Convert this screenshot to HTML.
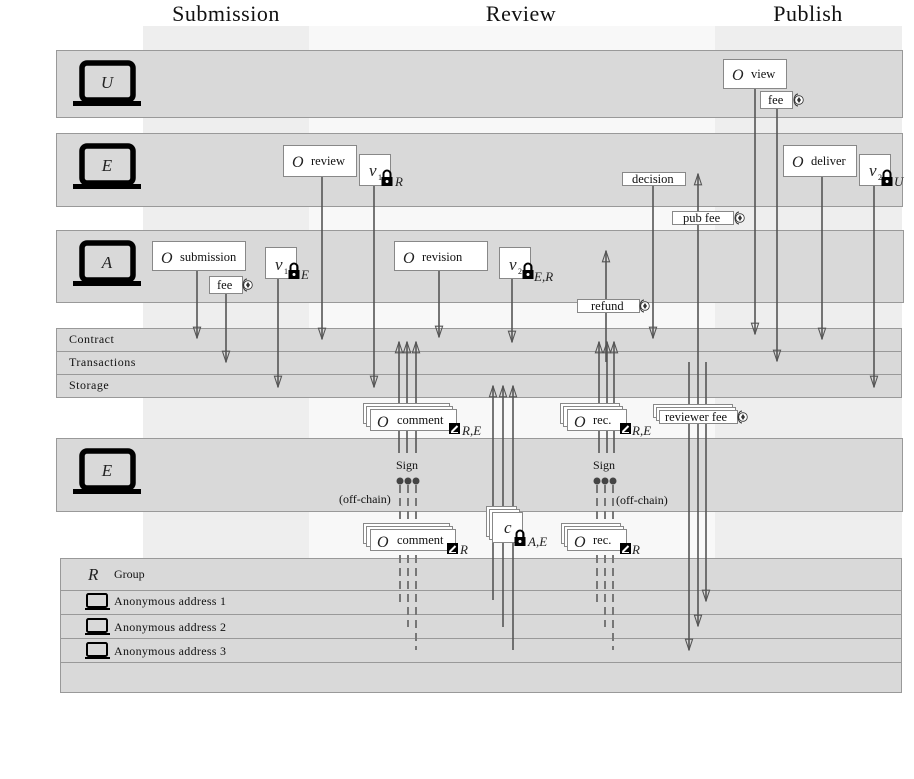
<!DOCTYPE html>
<html><head><meta charset="utf-8"><style>
html,body{margin:0;padding:0;background:#fff}
svg{display:block}
text{font-family:"Liberation Serif",serif;fill:#111}
.s{font-style:italic;fill:#222}
</style></head><body>
<svg width="914" height="779" viewBox="0 0 914 779" xmlns="http://www.w3.org/2000/svg">
<defs>
<marker id="d" viewBox="0 0 14 10" refX="13" refY="5" markerWidth="13" markerHeight="9" markerUnits="userSpaceOnUse" orient="auto">
<path d="M1,1 L13,5 L1,9 Z" fill="none" stroke="#555" stroke-width="1.2"/>
</marker>
<g id="lap"><rect x="82" y="63" width="51" height="37" rx="5" fill="none" stroke="#000" stroke-width="5.5"/><rect x="73" y="101" width="68" height="5" fill="#000"/></g>
<g id="smlap"><rect x="87" y="0" width="20" height="13" rx="1.5" fill="none" stroke="#000" stroke-width="2"/><rect x="85" y="14" width="25" height="2" fill="#000"/></g>
<g id="lock"><path d="M-3.5,0 V-3 A3.5,3.5 0 0 1 3.5,-3 V0" fill="none" stroke="#000" stroke-width="2"/><rect x="-5.5" y="0" width="11" height="9" fill="#000"/><circle cx="0" cy="4.5" r="1.5" fill="#fff"/></g>
<g id="eth"><path d="M4,0 A4,6 0 1 0 4,12" fill="none" stroke="#333" stroke-width="1"/><circle cx="5" cy="6" r="4.3" fill="#fff" stroke="#333" stroke-width="0.8"/><path d="M5,3 L7,6 L5,9 L3,6Z" fill="#333"/></g>
<g id="pen"><rect x="0" y="0" width="11" height="11" fill="#000"/><path d="M2.5,9 L8.5,3" stroke="#fff" stroke-width="2"/><path d="M2,9.5 H9" stroke="#fff" stroke-width="1"/></g>
</defs>

<rect x="143" y="26" width="166" height="532" fill="#eeeeee"/>
<rect x="309" y="26" width="406" height="532" fill="#f8f8f8"/>
<rect x="715" y="26" width="187" height="532" fill="#eeeeee"/>
<text x="226" y="21" font-size="22" text-anchor="middle" letter-spacing="0.5">Submission</text>
<text x="521" y="21" font-size="22" text-anchor="middle" letter-spacing="0.5">Review</text>
<text x="808" y="21" font-size="22" text-anchor="middle" letter-spacing="0.5">Publish</text>

<g fill="#d9d9d9" stroke="#999" stroke-width="1">
<rect x="56.5" y="50.5" width="846" height="67"/>
<rect x="56.5" y="133.5" width="846" height="73"/>
<rect x="56.5" y="230.5" width="847" height="72"/>
<rect x="56.5" y="328.5" width="845" height="69"/>
<rect x="56.5" y="438.5" width="846" height="73"/>
<rect x="60.5" y="558.5" width="841" height="134"/>
</g>
<g stroke="#999" stroke-width="1">
<line x1="56" y1="351.5" x2="902" y2="351.5"/><line x1="56" y1="374.5" x2="902" y2="374.5"/>
<line x1="60" y1="590.5" x2="902" y2="590.5"/><line x1="60" y1="614.5" x2="902" y2="614.5"/><line x1="60" y1="638.5" x2="902" y2="638.5"/><line x1="60" y1="662.5" x2="902" y2="662.5"/>
</g>
<text x="69" y="343" font-size="12" letter-spacing="0.5">Contract</text>
<text x="69" y="366" font-size="12" letter-spacing="0.5">Transactions</text>
<text x="69" y="389" font-size="12" letter-spacing="0.5">Storage</text>

<use href="#lap"/><text class="s" x="107" y="88" font-size="17" text-anchor="middle">U</text>
<use href="#lap" y="83"/><text class="s" x="107" y="171" font-size="17" text-anchor="middle">E</text>
<use href="#lap" y="180"/><text class="s" x="107" y="268" font-size="17" text-anchor="middle">A</text>
<use href="#lap" y="388"/><text class="s" x="107" y="476" font-size="17" text-anchor="middle">E</text>

<text class="s" x="88" y="580" font-size="17">R</text><text x="114" y="578" font-size="12">Group</text>
<use href="#smlap" y="594"/><text x="114" y="605" font-size="12" letter-spacing="0.3">Anonymous address 1</text>
<use href="#smlap" y="619"/><text x="114" y="631" font-size="12" letter-spacing="0.3">Anonymous address 2</text>
<use href="#smlap" y="643"/><text x="114" y="655" font-size="12" letter-spacing="0.3">Anonymous address 3</text>

<g stroke="#555" stroke-width="1.6" fill="none" marker-end="url(#d)">
<line x1="197" y1="270" x2="197" y2="338"/>
<line x1="226" y1="293" x2="226" y2="362"/>
<line x1="278" y1="278" x2="278" y2="387"/>
<line x1="322" y1="176" x2="322" y2="339"/>
<line x1="374" y1="185" x2="374" y2="387"/>
<line x1="439" y1="270" x2="439" y2="337"/>
<line x1="512" y1="278" x2="512" y2="342"/>
<line x1="653" y1="185" x2="653" y2="338"/>
<line x1="755" y1="88" x2="755" y2="334"/>
<line x1="777" y1="108" x2="777" y2="361"/>
<line x1="822" y1="176" x2="822" y2="339"/>
<line x1="874" y1="185" x2="874" y2="387"/>
<line x1="399" y1="453" x2="399" y2="342"/>
<line x1="407" y1="453" x2="407" y2="342"/>
<line x1="416" y1="453" x2="416" y2="342"/>
<line x1="599" y1="453" x2="599" y2="342"/>
<line x1="607" y1="453" x2="607" y2="342"/>
<line x1="614" y1="453" x2="614" y2="342"/>
<line x1="493" y1="600" x2="493" y2="386"/>
<line x1="503" y1="627" x2="503" y2="386"/>
<line x1="513" y1="650" x2="513" y2="386"/>
<line x1="606" y1="362" x2="606" y2="251"/>
<line x1="698" y1="362" x2="698" y2="174"/>
<line x1="706" y1="362" x2="706" y2="601"/>
<line x1="698" y1="362" x2="698" y2="626"/>
<line x1="689" y1="362" x2="689" y2="650"/>
</g>
<g stroke="#777" stroke-width="2" stroke-dasharray="8,5" fill="none">
<line x1="400" y1="485" x2="400" y2="520"/><line x1="408" y1="485" x2="408" y2="520"/><line x1="416" y1="485" x2="416" y2="520"/>
<line x1="400" y1="555" x2="400" y2="603"/><line x1="408" y1="555" x2="408" y2="627"/><line x1="416" y1="555" x2="416" y2="650"/>
<line x1="597" y1="485" x2="597" y2="520"/><line x1="605" y1="485" x2="605" y2="520"/><line x1="613" y1="485" x2="613" y2="520"/>
<line x1="597" y1="555" x2="597" y2="603"/><line x1="605" y1="555" x2="605" y2="627"/><line x1="613" y1="555" x2="613" y2="650"/>
</g>
<g fill="#444"><circle cx="400" cy="481" r="3.5"/><circle cx="408" cy="481" r="3.5"/><circle cx="416" cy="481" r="3.5"/>
<circle cx="597" cy="481" r="3.5"/><circle cx="605" cy="481" r="3.5"/><circle cx="613" cy="481" r="3.5"/></g>
<text x="407" y="469" font-size="12" text-anchor="middle">Sign</text>
<text x="604" y="469" font-size="12" text-anchor="middle">Sign</text>
<text x="339" y="503" font-size="12">(off-chain)</text>
<text x="616" y="504" font-size="12">(off-chain)</text>

<g fill="#fff" stroke="#888" stroke-width="1">
<rect x="152.5" y="241.5" width="93" height="29"/>
<rect x="209.5" y="276.5" width="33" height="17"/>
<rect x="265.5" y="247.5" width="31" height="31"/>
<rect x="283.5" y="145.5" width="73" height="31"/>
<rect x="359.5" y="154.5" width="31" height="31"/>
<rect x="394.5" y="241.5" width="93" height="29"/>
<rect x="499.5" y="247.5" width="31" height="31"/>
<rect x="723.5" y="59.5" width="63" height="29"/>
<rect x="760.5" y="91.5" width="32" height="17"/>
<rect x="622.5" y="172.5" width="63" height="13"/>
<rect x="672.5" y="211.5" width="61" height="13"/>
<rect x="783.5" y="145.5" width="73" height="31"/>
<rect x="859.5" y="154.5" width="31" height="31"/>
<rect x="577.5" y="299.5" width="62" height="13"/>
<rect x="363.5" y="403.5" width="86" height="20"/><rect x="366.5" y="406.5" width="86" height="20"/><rect x="370.5" y="409.5" width="86" height="21"/>
<rect x="363.5" y="523.5" width="86" height="20"/><rect x="366.5" y="526.5" width="86" height="20"/><rect x="370.5" y="529.5" width="85" height="21"/>
<rect x="560.5" y="403.5" width="59" height="20"/><rect x="563.5" y="406.5" width="59" height="20"/><rect x="567.5" y="409.5" width="59" height="21"/>
<rect x="561.5" y="523.5" width="59" height="20"/><rect x="564.5" y="526.5" width="59" height="20"/><rect x="567.5" y="529.5" width="59" height="21"/>
<rect x="653.5" y="404.5" width="79" height="13"/><rect x="656.5" y="407.5" width="79" height="13"/><rect x="659.5" y="410.5" width="78" height="13"/>
<rect x="486.5" y="506.5" width="30" height="30"/><rect x="489.5" y="509.5" width="30" height="30"/><rect x="492.5" y="512.5" width="30" height="30"/>
</g>
<g font-size="12.5">
<text class="s" x="161" y="263" font-size="16">O</text><text x="180" y="261">submission</text>
<text x="217" y="289">fee</text>
<text class="s" x="292" y="167" font-size="16">O</text><text x="311" y="165">review</text>
<text class="s" x="403" y="263" font-size="16">O</text><text x="422" y="261">revision</text>
<text class="s" x="732" y="80" font-size="16">O</text><text x="751" y="78">view</text>
<text x="768" y="104">fee</text>
<text x="632" y="183">decision</text>
<text x="683" y="222">pub fee</text>
<text class="s" x="792" y="167" font-size="16">O</text><text x="811" y="165">deliver</text>
<text x="591" y="310">refund</text>
<text class="s" x="377" y="427" font-size="16">O</text><text x="397" y="424">comment</text>
<text class="s" x="377" y="547" font-size="16">O</text><text x="397" y="544">comment</text>
<text class="s" x="574" y="427" font-size="16">O</text><text x="593" y="424">rec.</text>
<text class="s" x="574" y="547" font-size="16">O</text><text x="593" y="544">rec.</text>
<text x="665" y="421">reviewer fee</text>
<text class="s" x="504" y="533" font-size="17">c</text>
<text class="s" x="275" y="270" font-size="17">v</text><text x="284" y="274" font-size="8">1</text>
<text class="s" x="369" y="176" font-size="17">v</text><text x="378" y="180" font-size="8">1</text>
<text class="s" x="509" y="270" font-size="17">v</text><text x="518" y="274" font-size="8">2</text>
<text class="s" x="869" y="176" font-size="17">v</text><text x="878" y="180" font-size="8">2</text>
<text class="s" x="301" y="279" font-size="13">E</text>
<text class="s" x="395" y="186" font-size="13">R</text>
<text class="s" x="534" y="281" font-size="13">E,R</text>
<text class="s" x="894" y="186" font-size="13">U</text>
<text class="s" x="528" y="546" font-size="13">A,E</text>
<text class="s" x="462" y="435" font-size="13">R,E</text>
<text class="s" x="460" y="554" font-size="13">R</text>
<text class="s" x="632" y="435" font-size="13">R,E</text>
<text class="s" x="632" y="554" font-size="13">R</text>
</g>
<use href="#lock" x="294" y="270"/>
<use href="#lock" x="387" y="177"/>
<use href="#lock" x="528" y="270"/>
<use href="#lock" x="887" y="177"/>
<use href="#lock" x="520" y="537"/>
<use href="#pen" x="449" y="423"/>
<use href="#pen" x="447" y="543"/>
<use href="#pen" x="620" y="423"/>
<use href="#pen" x="620" y="543"/>
<use href="#eth" x="243" y="279"/>
<use href="#eth" x="794" y="94"/>
<use href="#eth" x="735" y="212"/>
<use href="#eth" x="640" y="300"/>
<use href="#eth" x="738" y="411"/>
</svg>
</body></html>
